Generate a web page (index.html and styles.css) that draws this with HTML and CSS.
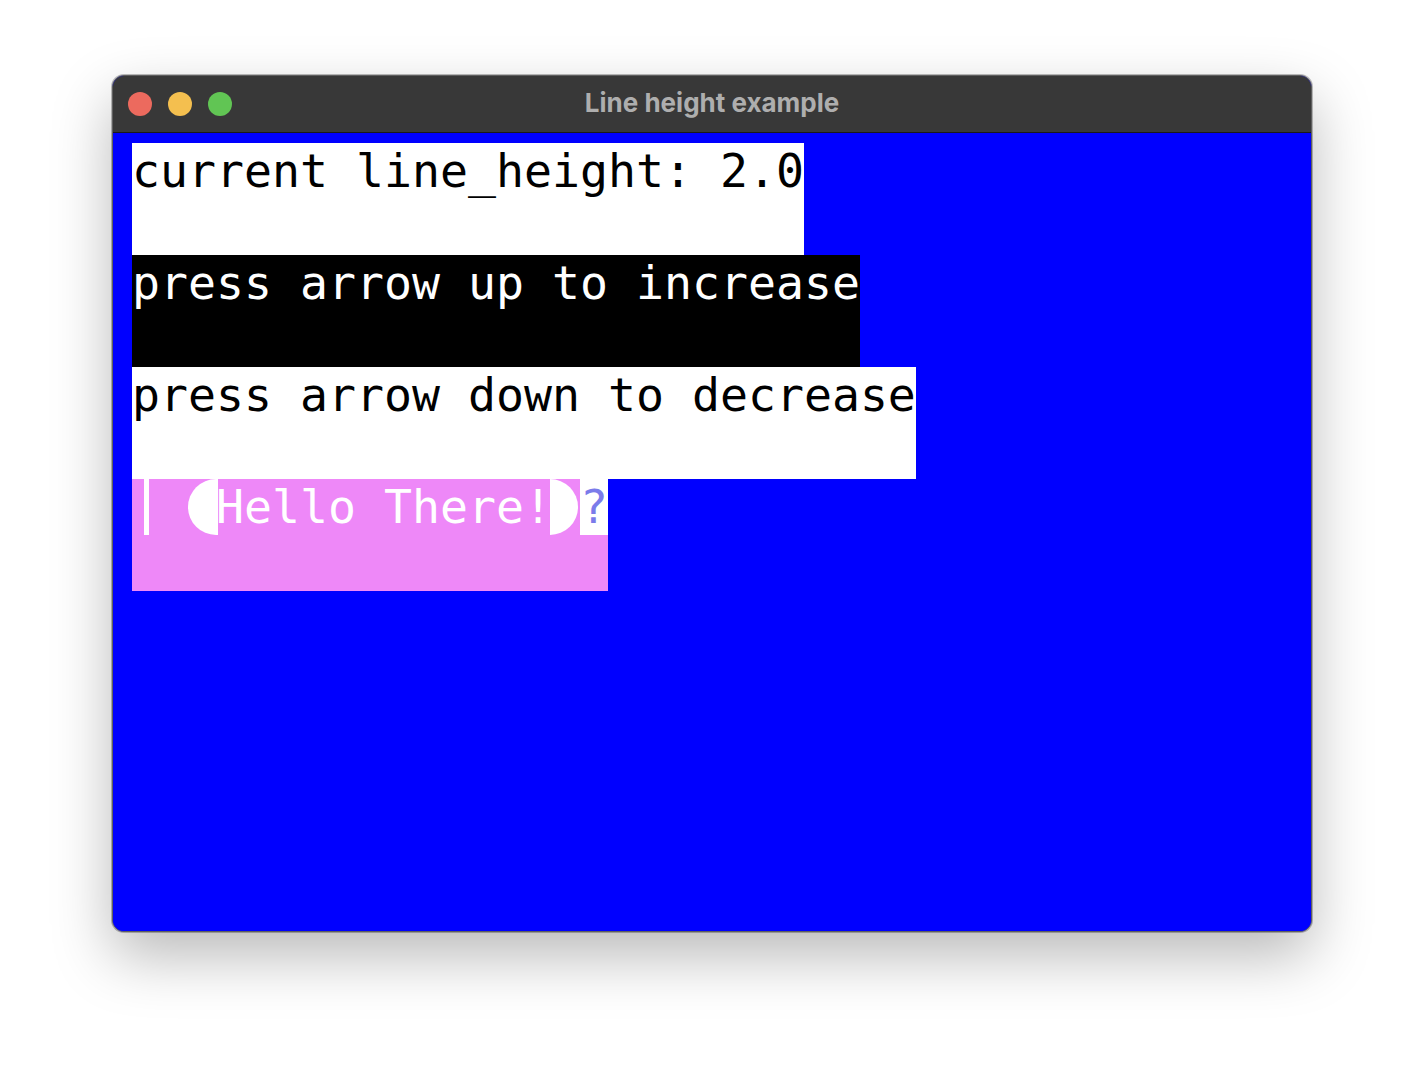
FILE: index.html
```html
<!DOCTYPE html>
<html>
<head>
<meta charset="utf-8">
<link rel="stylesheet" href="styles.css">
</head>
<body>
<div class="window">
  <div class="titlebar">
    <div class="lights">
      <span class="light red"></span>
      <span class="light yellow"></span>
      <span class="light green"></span>
    </div>
    <div class="title">Line height example</div>
    <div></div>
  </div>
  <div class="content">
    <div class="row light-row">current line_height: 2.0</div>
    <div class="row dark-row">press arrow up to increase</div>
    <div class="row light-row">press arrow down to decrease</div>
    <div class="row pink-row">
      <span class="cell cursor-cell"><span class="cursor"></span></span>
      <span class="cell"></span>
      <span class="cell cap-left"></span>
      <span class="hello">Hello There!</span>
      <span class="cell cap-right"></span>
      <span class="cell question">?</span>
    </div>
  </div>
</div>
</body>
</html>
```

FILE: styles.css
```css
html, body {
  margin: 0;
  padding: 0;
  background: #ffffff;
}
body {
  padding: 75px 0 0 112px;
  height: 1080px;
  box-sizing: border-box;
}
.window {
  width: 1200px;
  height: 857px;
  border-radius: 12px;
  overflow: hidden;
  box-sizing: border-box;
  border: 1px solid #5e5e5e;
  box-shadow: 0 24px 60px rgba(0, 0, 0, 0.28), 0 0 0 1px rgba(0, 0, 0, 0.25);
  display: flex;
  flex-direction: column;
  background: #0000ff;
}
.titlebar {
  height: 56px;
  flex: none;
  background: #383838;
  border-bottom: 1px solid #1a1a1a;
  display: grid;
  grid-template-columns: 1fr auto 1fr;
  align-items: center;
}
.lights {
  display: flex;
  gap: 16px;
  padding-left: 15px;
}
.light {
  width: 24px;
  height: 24px;
  border-radius: 50%;
  display: block;
}
.red { background: #ec6a5e; }
.yellow { background: #f4bf4f; }
.green { background: #61c554; }
.title {
  font-family: Inter, "Open Sans", "Liberation Sans", sans-serif;
  font-weight: 700;
  font-size: 26px;
  color: #aeaeae;
  padding-bottom: 4px;
}
.content {
  flex: 1;
  background: #0000ff;
  padding: 10px 0 0 19px;
  display: flex;
  flex-direction: column;
  align-items: flex-start;
}
.row {
  height: 112px;
  line-height: 56px;
  font-family: "DejaVu Sans Mono", "Liberation Mono", monospace;
  font-size: 46.5px;
  white-space: pre;
}
.light-row {
  background: #ffffff;
  color: #000000;
}
.dark-row {
  background: #000000;
  color: #ffffff;
}
.pink-row {
  background: #ee88f8;
  color: #ffffff;
  display: flex;
  align-items: flex-start;
}
.cell {
  width: 28px;
  height: 56px;
  flex: none;
  display: block;
}
.cursor-cell {
  display: flex;
  padding-left: 12px;
  box-sizing: border-box;
}
.cursor {
  width: 5px;
  height: 56px;
  background: #ffffff;
}
.cap-left {
  background: #ffffff;
  border-radius: 28px 0 0 28px;
  width: 30px;
  margin-right: -2px;
}
.cap-right {
  background: #ffffff;
  border-radius: 0 28px 28px 0;
  margin-left: -2px;
}
.hello {
  width: 336px;
  height: 56px;
  display: block;
  position: relative;
}
.question {
  background: #ffffff;
  color: #7b7bea;
  margin-left: 2px;
  width: 28px;
}
```
